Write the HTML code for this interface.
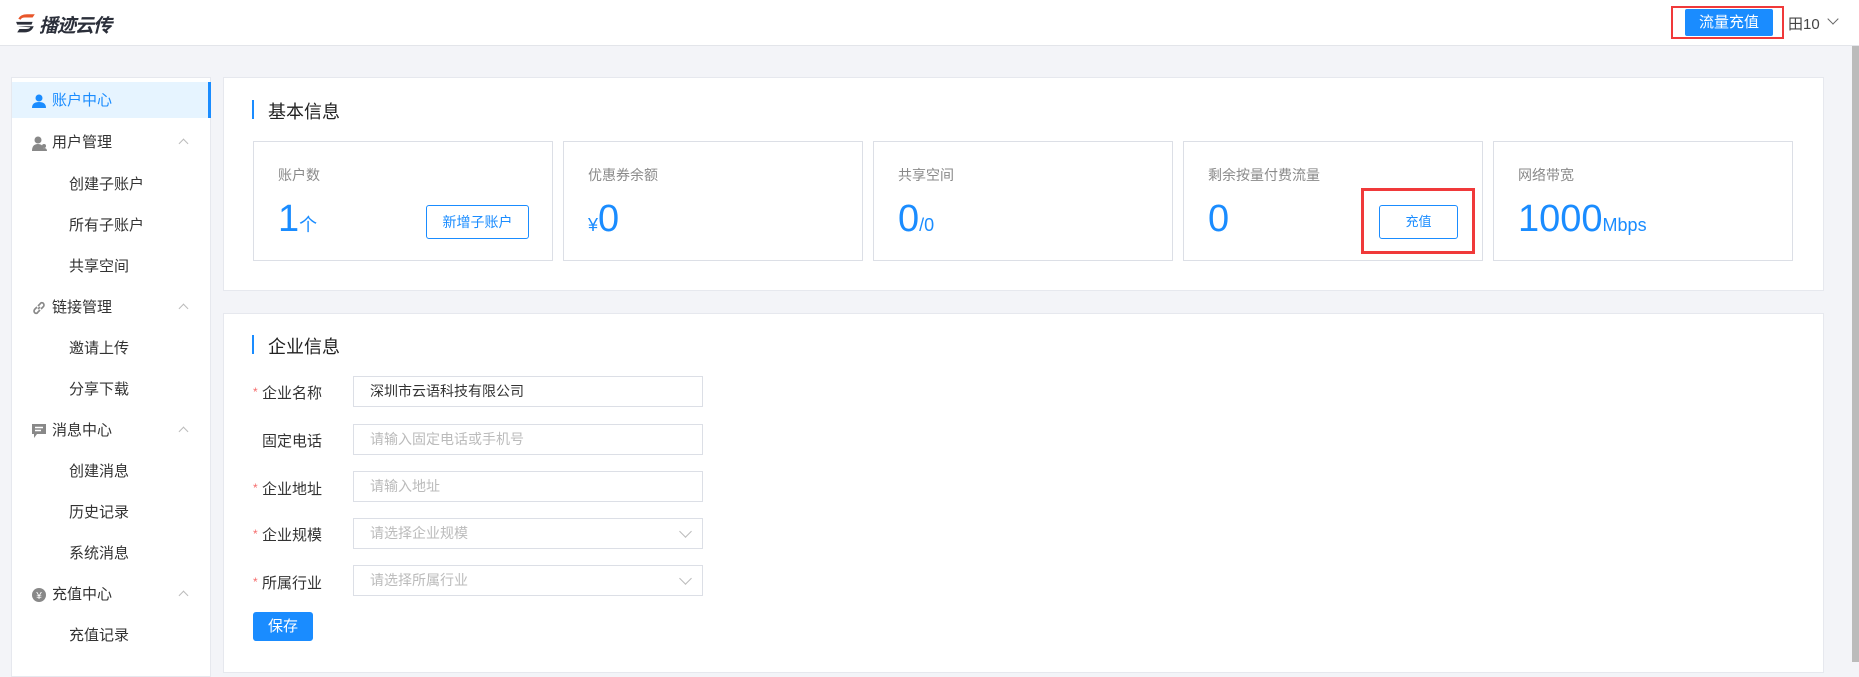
<!DOCTYPE html>
<html><head><meta charset="utf-8"><style>
*{margin:0;padding:0;box-sizing:border-box}
body{width:1859px;height:662px;overflow:hidden;background:#f3f4f8;font-family:"Liberation Sans","Noto Sans CJK SC",sans-serif;color:#333;position:relative}
.abs{position:absolute}
.hdr{left:0;top:0;width:1859px;height:46px;background:#fff;border-bottom:1px solid #e3e5ea}
.sb{left:11px;top:77px;width:200px;height:600px;background:#fff;border:1px solid #e6e8ee}
.mi{position:absolute;left:0;width:198px;height:20px;font-size:15px;line-height:20px;color:#333}
.card{background:#fff;border:1px solid #e6e8ee}
.box{top:141px;width:300px;height:120px;border:1px solid #dcdfe6;background:#fff}
.box .l{position:absolute;left:24px;top:23px;font-size:14px;color:#8a8a8a}
.box .n{position:absolute;left:24px;top:55px;font-size:38px;color:#1a8cff;line-height:44px}
.btn{border:1px solid #1a8cff;color:#1a8cff;border-radius:3px;font-size:14px;text-align:center;background:#fff}
.lab{left:262px;font-size:15px;color:#333}
.ast{left:253px;font-size:12px;color:#f56c6c}
.inp{left:353px;width:350px;height:31px;border:1px solid #dcdfe6;font-size:14px;color:#bbb;padding-left:16px;line-height:29px}
.chev{position:absolute;right:12px;top:8px;width:9px;height:9px;border-right:1px solid #bbb;border-bottom:1px solid #bbb;transform:rotate(45deg)}
.up{position:absolute;left:168px;top:7px;width:7px;height:7px;border-left:1px solid #bbb;border-top:1px solid #bbb;transform:rotate(45deg)}
</style></head><body>
<div class="abs hdr">
 <svg class="abs" style="left:15px;top:13px" width="22" height="20" viewBox="0 0 20 18"><path d="M3 5 Q5 1 11 1 L18 1 L16 4 L9 4 Q6 4 5 6Z" fill="#e8562a"/><path d="M1 8 L16 8 L15 10.5 L2 10.5Z" fill="#2b2f3a"/><path d="M2 12 L17 12 Q15 17.5 9 17.5 L2 17.5 L4 14.5 L10 14.5 Q13 14.5 14 13Z" fill="#2b2f3a"/></svg>
 <div class="abs" style="left:39px;top:11px;font-size:19px;font-weight:bold;font-style:italic;color:#2b2f3a;letter-spacing:-1px">播迹云传</div>
 <div class="abs" style="left:1671px;top:6px;width:113px;height:33px;border:2px solid #f0393a"></div>
 <div class="abs" style="left:1685px;top:9px;width:88px;height:27px;background:#1a8cff;color:#fff;font-size:15px;text-align:center;line-height:27px;border-radius:2px">流量充值</div>
 <div class="abs" style="left:1788px;top:13px;font-size:15px;color:#444">田10</div>
 <div class="abs" style="left:1829px;top:15px;width:8px;height:8px;border-right:1px solid #666;border-bottom:1px solid #666;transform:rotate(45deg)"></div>
</div>
<div class="abs" style="left:1852px;top:46px;width:7px;height:616px;background:#bbb"></div>
<div class="abs sb">
 <div class="abs" style="left:0;top:4px;width:198px;height:36px;background:#e6f4ff"></div>
 <div class="abs" style="left:196px;top:4px;width:3px;height:36px;background:#1a8cff"></div>
 <div class="mi" style="top:13px;color:#1a8cff"><svg style="position:absolute;left:20px;top:3px" width="14" height="14" viewBox="0 0 14 14"><circle cx="7" cy="4" r="3.5" fill="#1a8cff"/><path d="M0 14 Q0 8 7 8 Q14 8 14 14Z" fill="#1a8cff"/></svg><span style="position:absolute;left:40px">账户中心</span></div>
 <div class="mi" style="top:55px"><svg style="position:absolute;left:20px;top:3px" width="15" height="15" viewBox="0 0 15 15"><circle cx="6" cy="4" r="3.5" fill="#888"/><path d="M0 15 Q0 8 6 8 Q10 8 11 11 L11 15Z" fill="#888"/><circle cx="12" cy="10" r="2" fill="#888"/><path d="M9 15 Q9 12 12 12 Q15 12 15 15Z" fill="#888"/></svg><span style="position:absolute;left:40px">用户管理</span><i class="up"></i></div>
 <div class="mi" style="top:97px"><span style="position:absolute;left:57px">创建子账户</span></div>
 <div class="mi" style="top:138px"><span style="position:absolute;left:57px">所有子账户</span></div>
 <div class="mi" style="top:179px"><span style="position:absolute;left:57px">共享空间</span></div>
 <div class="mi" style="top:220px"><svg style="position:absolute;left:20px;top:3px" width="14" height="14" viewBox="0 0 14 14" fill="none" stroke="#888" stroke-width="1.6"><path d="M6 8 L8 6"/><path d="M5 6 L3 8 Q1 10 3 12 Q5 13 6 11 L8 9"/><path d="M9 8 L11 6 Q13 4 11 2 Q9 1 8 3 L6 5"/></svg><span style="position:absolute;left:40px">链接管理</span><i class="up"></i></div>
 <div class="mi" style="top:261px"><span style="position:absolute;left:57px">邀请上传</span></div>
 <div class="mi" style="top:302px"><span style="position:absolute;left:57px">分享下载</span></div>
 <div class="mi" style="top:343px"><svg style="position:absolute;left:20px;top:3px" width="14" height="15" viewBox="0 0 14 15"><path d="M0 0 H14 V10 H5 L2 14 V10 H0Z" fill="#888"/><path d="M3 3.5 H11 M3 6.5 H9" stroke="#fff" stroke-width="1.4"/></svg><span style="position:absolute;left:40px">消息中心</span><i class="up"></i></div>
 <div class="mi" style="top:384px"><span style="position:absolute;left:57px">创建消息</span></div>
 <div class="mi" style="top:425px"><span style="position:absolute;left:57px">历史记录</span></div>
 <div class="mi" style="top:466px"><span style="position:absolute;left:57px">系统消息</span></div>
 <div class="mi" style="top:507px"><svg style="position:absolute;left:20px;top:3px" width="14" height="14" viewBox="0 0 14 14"><circle cx="7" cy="7" r="7" fill="#888"/><text x="7" y="11" font-size="10" fill="#fff" text-anchor="middle" font-family="Liberation Sans">¥</text></svg><span style="position:absolute;left:40px">充值中心</span><i class="up"></i></div>
 <div class="mi" style="top:548px"><span style="position:absolute;left:57px">充值记录</span></div>
</div>
<div class="abs card" style="left:223px;top:77px;width:1601px;height:214px"></div>
<div class="abs" style="left:252px;top:100px;width:2px;height:19px;background:#1a8cff"></div>
<div class="abs" style="left:268px;top:98px;font-size:18px;color:#222">基本信息</div>
<div class="abs box" style="left:253px"><div class="l">账户数</div><div class="n">1<span style="font-size:18px">个</span></div><div class="abs btn" style="left:172px;top:63px;width:103px;height:34px;line-height:32px">新增子账户</div></div>
<div class="abs box" style="left:563px"><div class="l">优惠券余额</div><div class="n"><span style="font-size:18px">¥</span>0</div></div>
<div class="abs box" style="left:873px"><div class="l">共享空间</div><div class="n">0<span style="font-size:18px">/0</span></div></div>
<div class="abs box" style="left:1183px"><div class="l">剩余按量付费流量</div><div class="n">0</div><div class="abs btn" style="left:195px;top:63px;width:79px;height:34px;line-height:32px;font-size:13px">充值</div><div class="abs" style="left:177px;top:46px;width:114px;height:66px;border:3px solid #f0393a"></div></div>
<div class="abs box" style="left:1493px"><div class="l">网络带宽</div><div class="n">1000<span style="font-size:18px">Mbps</span></div></div>
<div class="abs card" style="left:223px;top:313px;width:1601px;height:360px"></div>
<div class="abs" style="left:252px;top:335px;width:2px;height:19px;background:#1a8cff"></div>
<div class="abs" style="left:268px;top:333px;font-size:18px;color:#222">企业信息</div>
<div class="abs ast" style="top:385px">*</div><div class="abs lab" style="top:382px">企业名称</div>
<div class="abs inp" style="top:376px;color:#333">深圳市云语科技有限公司</div>
<div class="abs lab" style="top:430px">固定电话</div>
<div class="abs inp" style="top:424px">请输入固定电话或手机号</div>
<div class="abs ast" style="top:481px">*</div><div class="abs lab" style="top:478px">企业地址</div>
<div class="abs inp" style="top:471px">请输入地址</div>
<div class="abs ast" style="top:527px">*</div><div class="abs lab" style="top:524px">企业规模</div>
<div class="abs inp" style="top:518px">请选择企业规模<i class="chev"></i></div>
<div class="abs ast" style="top:575px">*</div><div class="abs lab" style="top:572px">所属行业</div>
<div class="abs inp" style="top:565px">请选择所属行业<i class="chev"></i></div>
<div class="abs" style="left:253px;top:612px;width:60px;height:29px;background:#1a8cff;border-radius:3px;color:#fff;font-size:15px;text-align:center;line-height:29px">保存</div>
</body></html>
